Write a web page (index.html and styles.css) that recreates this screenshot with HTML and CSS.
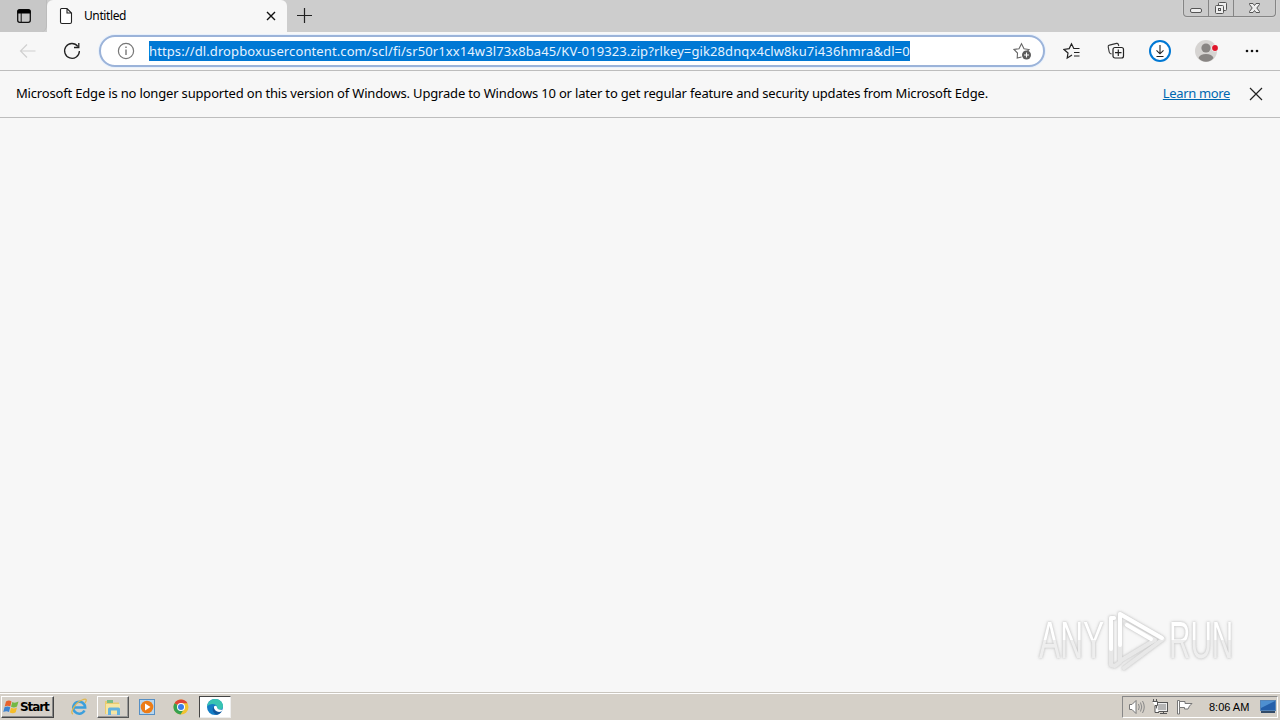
FILE: index.html
```html
<!DOCTYPE html>
<html lang="en">
<head>
<meta charset="utf-8">
<title>Untitled</title>
<link rel="stylesheet" href="styles.css">
</head>
<body>
<div class="screen">
  <header class="tabstrip">
    <div class="tab-actions"><svg width="16" height="16" viewBox="0 0 16 16"><rect x="1.7" y="1.7" width="12.6" height="12.6" rx="2" fill="none" stroke="#111" stroke-width="1.3"/><path d="M1.5 5.5V3.3Q1.5 1.5 3.3 1.5H12.7Q14.5 1.5 14.5 3.3V5.5Z" fill="#000"/><path d="M5.2 5V14" stroke="#111"/></svg></div>
    <div class="tab">
      <svg class="page-icon" width="14" height="18" viewBox="0 0 14 18"><path d="M2.500 1.500H8L12.500 6V15Q12.500 16.500 11 16.500H3Q1.500 16.500 1.500 15V2.500Q1.500 1.500 2.500 1.500ZM8 1.500V6H12.500" fill="#fff" stroke="#222" stroke-width="1.1"/></svg>
      <span class="tab-title">Untitled</span>
      <svg class="tab-close" width="10" height="10" viewBox="0 0 10 10"><path d="M1 1L9 9M9 1L1 9" stroke="#111" stroke-width="1.4"/></svg>
    </div>
    <svg class="new-tab" width="16" height="16" viewBox="0 0 16 16"><path d="M1 8.500H16M8.500 1V16" stroke="#222" stroke-width="1.2"/></svg>
    <div class="window-controls">
      <span class="ctl ctl-min"><svg width="24" height="16" viewBox="0 0 24 16"><rect x="6.500" y="8.500" width="11" height="4" rx="1.5" fill="#eee" stroke="#555"/></svg></span>
      <span class="ctl ctl-max"><svg width="24" height="16" viewBox="0 0 24 16"><g fill="#eee" stroke="#555"><rect x="9.500" y="2.500" width="8" height="8" rx="1"/><rect x="6.500" y="5.500" width="8" height="8" rx="1"/><rect x="9.500" y="8.500" width="2" height="2"/></g></svg></span>
      <span class="ctl ctl-close"><svg width="42" height="16" viewBox="0 0 42 16"><path d="M15.500 3.500H19L20.500 5.500L22 3.500H25.500V4.500L22.800 8L25.500 11.500V12.500H22L20.500 10.500L19 12.500H15.500V11.500L18.200 8L15.500 4.500Z" fill="#eee" stroke="#555"/></svg></span>
    </div>
  </header>

  <nav class="toolbar">
    <svg class="back" width="18" height="16" viewBox="0 0 18 16"><path d="M16.500 8H1.800M8 1.500L1.500 8L8 14.500" fill="none" stroke="#d0d0d0" stroke-width="1.2"/></svg>
    <svg class="reload" width="18" height="18" viewBox="0 0 18 18"><path d="M14.800 4.300A7.400 7.400 0 1 0 16.400 9M15.800 1V5.500H11" fill="none" stroke="#222" stroke-width="1.3"/></svg>
    <div class="address">
      <svg class="info" width="18" height="18" viewBox="0 0 18 18"><circle cx="9" cy="9" r="7.600" fill="none" stroke="#777" stroke-width="1.2"/><path d="M9 7.500V13M9 4.500V6" stroke="#777" stroke-width="1.4"/></svg>
      <span class="url">https://dl.dropboxusercontent.com/scl/fi/sr50r1xx14w3l73x8ba45/KV-019323.zip?rlkey=gik28dnqx4clw8ku7i436hmra&amp;dl=0</span>
      <svg class="add-favorite" width="19" height="18" viewBox="0 0 19 18"><path d="M8.500 15L4.200 16L4.500 11L1 7.500L6 6.700L8.500 1.800L11 6.700L16 7.500L14.500 9" fill="none" stroke="#666" stroke-width="1.1"/><circle cx="13.500" cy="13" r="4.500" fill="#5c5c5c"/><path d="M11 13H16M13.500 10.500V15.500" stroke="#fff" stroke-width="1.1"/></svg>
    </div>
    <div class="tools">
      <svg width="18" height="18" viewBox="0 0 18 18"><path d="M9 13L4.200 16L5 11L1 7.500L6.200 6.600L8.500 1.800L10.800 6.500H16.500M11 10.500H16.500M11 14H16.500" fill="none" stroke="#222" stroke-width="1.2"/></svg>
      <svg width="18" height="18" viewBox="0 0 18 18"><path d="M4.500 12L3.300 11.500Q2.400 11 2.200 10L1.200 4.800Q1 3.400 2.400 3.100L9.500 1.400Q10.900 1.200 11.400 2.500L11.800 4" fill="none" stroke="#333" stroke-width="1.1"/><rect x="6" y="5.500" width="10.500" height="10.500" rx="2" fill="#f7f7f7" stroke="#222" stroke-width="1.2"/><path d="M8 10.700H14.500M11.300 7.500V14" stroke="#222" stroke-width="1.2"/></svg>
      <svg class="download" width="24" height="24" viewBox="0 0 24 24"><circle cx="12" cy="12" r="10" fill="#fff" stroke="#0078d4" stroke-width="2"/><path d="M12 6V14.500M8.500 11.300L12 14.800L15.500 11.300M8.500 17.500H15.500" fill="none" stroke="#222" stroke-width="1.1"/></svg>
      <svg class="profile" width="24" height="24" viewBox="0 0 24 24"><circle cx="11" cy="12" r="11" fill="#d6d4d2"/><circle cx="11" cy="9" r="4.600" fill="#888583"/><path d="M3.500 19Q5 15 11 15T18.500 19Q15.500 22.800 11 22.800T3.500 19Z" fill="#888583"/><circle cx="20" cy="9" r="3.600" fill="#f7f7f7"/><circle cx="20" cy="9" r="2.900" fill="#e0162b"/></svg>
      <svg class="more" width="14" height="4" viewBox="0 0 14 4"><g fill="#111"><circle cx="2" cy="2" r="1.300"/><circle cx="7" cy="2" r="1.300"/><circle cx="12" cy="2" r="1.300"/></g></svg>
    </div>
  </nav>

  <div class="infobar">
    <span class="message">Microsoft Edge is no longer supported on this version of Windows. Upgrade to Windows 10 or later to get regular feature and security updates from Microsoft Edge.</span>
    <a class="learn">Learn more</a>
    <svg class="dismiss" width="14" height="14" viewBox="0 0 14 14"><path d="M1 1L13 13M13 1L1 13" stroke="#222" stroke-width="1.2"/></svg>
  </div>

  <main class="content">
    <div class="watermark">
      <span class="word word-any">ANY</span>
      <svg width="60" height="64" viewBox="0 0 60 64"><g fill="none" stroke-linejoin="round" stroke-linecap="round" stroke-width="4"><path d="M7 9H4V56L8 57L13 53M13 5L56 30L17 59M13 5V52L48 31L19 15" stroke="#e8e8e8"/><path d="M4 40V9H7M13 36V5L55 29M20 16L44 30" stroke="#fff"/></g></svg>
      <span class="word word-run">RUN</span>
    </div>
  </main>

  <footer class="taskbar">
    <div class="start"><svg width="17" height="16" viewBox="0 0 17 16"><path d="M3 2.500Q6 .5 8.500 2.500L7.300 7.500Q4.500 6 1.700 7.500Z" fill="#e8622c"/><path d="M9.300 3Q12 4.500 15.500 2.500L14 7.500Q11 9.500 8 7.800Z" fill="#73b843"/><path d="M1.500 8.300Q4.500 6.800 7.200 8.300L6 13Q3.500 11.500 .3 13Z" fill="#3d83d0"/><path d="M8 8.800Q11 10.300 14 8.500L12.700 13.300Q10 15 6.800 13.500Z" fill="#f5bd29"/></svg><span>Start</span></div>
    <div class="launchers">
      <span class="task"><svg width="18" height="18" viewBox="0 0 18 18"><path d="M14.500 12.500A6 6 0 1 1 15.200 9.500H4" fill="none" stroke="#3c9fdc" stroke-width="2.500"/><path d="M3 16C-1 15 6 4 12 2C17 0 17 2 15 5" fill="none" stroke="#dfb750" stroke-width="1.300"/></svg></span>
      <span class="task raised"><svg width="18" height="18" viewBox="0 0 18 18"><path d="M1 3H7L8 4.500H15V16H1Z" fill="#e8cb70"/><path d="M3 2H9V5H3Z" fill="#7bbd86"/><path d="M2 6H16V16H2Z" fill="#f6e6a2"/><path d="M4 17V11Q4 9.500 5.500 9.500H14.500Q16 9.500 16 11V17H13V12.500H7V17Z" fill="#62b2df"/></svg></span>
      <span class="task"><svg width="18" height="18" viewBox="0 0 18 18"><rect x="1.500" y="1.500" width="15" height="15" fill="#b7d6ef" stroke="#568fc4"/><circle cx="9" cy="9" r="6.300" fill="#ed7c16"/><path d="M7 5.500L12.500 9L7 12.500Z" fill="#fff"/></svg></span>
      <span class="task"><svg width="18" height="18" viewBox="0 0 18 18"><circle cx="9" cy="9" r="7.500" fill="#f1c331"/><path d="M9 9L2.500 5.200A7.500 7.500 0 0 1 15.500 5.200H9Z" fill="#df4436"/><path d="M2.500 5.200A7.500 7.500 0 0 0 8.500 16.500L12 11L9 9Z" fill="#35a151"/><circle cx="9" cy="9" r="4" fill="#fff"/><circle cx="9" cy="9" r="3" fill="#3b7de8"/></svg></span>
      <span class="task active"><svg width="18" height="18" viewBox="0 0 18 18"><circle cx="9" cy="9" r="8" fill="#147dc5"/><path d="M1.200 8.500C1.500 4 5 1 9.200 1C14 1 17 4.500 17 8C17 11 14.500 12 12 11.500C10.500 11.200 11.500 10.500 11.200 9C10.500 6 5 4.500 1.200 8.500Z" fill="#38c4b2"/><path d="M11 9C11 11 13 12.500 16.800 11.500L15 14Q11 15.500 8.500 13Q7 11 8 8.500Q10 7 11 9Z" fill="#fff"/><path d="M7.500 8.500Q5 13 10 16.700Q14 16.500 15.800 13.500Q9 15.500 7.500 8.500Z" fill="#12579c"/></svg></span>
    </div>
    <div class="tray">
      <svg width="18" height="18" viewBox="0 0 18 18"><path d="M1.500 6.500H4L8 2.500V15.500L4 11.500H1.500Z" fill="#fff" stroke="#777"/><path d="M10.500 6Q12 9 10.500 12M12.500 4.500Q15 9 12.500 13.500M14.500 3Q18 9 14.500 15" fill="none" stroke="#888"/></svg>
      <svg width="18" height="18" viewBox="0 0 18 18"><rect x="4.500" y="4.500" width="11" height="9" fill="#eee" stroke="#555"/><path d="M6 6H14V12H6Z" fill="#b5b5b5"/><path d="M8 15.500H15M11.500 13V15" stroke="#555"/><path d="M1.500 1V4M4.500 1V4M.5 3.500H5.500V7.500H3V14.500H7" fill="#fff" stroke="#555"/></svg>
      <svg width="18" height="18" viewBox="0 0 18 18"><path d="M1.500 2.500H3.500V16H1.500Z" fill="#fff" stroke="#777"/><path d="M3.500 3.500H9V5.500H16L13.500 8L12 11H8.500V9.500H3.500Z" fill="#fff" stroke="#777"/></svg>
      <span class="clock">8:06 AM</span>
      <svg class="desktop" width="16" height="14" viewBox="0 0 16 14"><rect x=".5" y=".5" width="15" height="10" fill="#245faa" stroke="#5584b7"/><path d="M1 1H15L1 8Z" fill="#4e8fd0"/><path d="M1 12H15" stroke="#334b68" stroke-width="2"/></svg>
    </div>
  </footer>
</div>
</body>
</html>
```
FILE: styles.css
```css
* { box-sizing: border-box; }
body { margin: 0; font-family: "Noto Sans", "Open Sans", sans-serif; color: #000; }
svg { display: block; flex: none; }
.screen { width: 1280px; height: 720px; display: flex; flex-direction: column; overflow: hidden; background: #f7f7f7; }
.tabstrip { height: 32px; flex: none; display: flex; background: #cdcdcd; }
.tab-actions { width: 47px; padding: 8px 0 0 16px; background: #c7c7c7; border-radius: 0 0 6px 0; border-right: 1px solid #bcbcbc; }
.tab { width: 240px; display: flex; align-items: center; padding: 0 11px 0 12px; background: #f7f7f7; border-radius: 6px 6px 0 0; }
.tab-title { margin-left: 11px; font-size: 12px; line-height: 18px; padding-bottom: 1px; letter-spacing: -0.4px; flex: 1; }
.new-tab { margin: 7px 0 0 9px; }
.window-controls { display: flex; width: 93px; height: 17px; margin: 0 4px 0 auto; border: 1px solid #858585; border-top: 0; border-radius: 0 0 4px 4px; background: #cbcbcb; box-shadow: 0 0 2px #e5e5e5; overflow: hidden; }
.ctl { display: flex; justify-content: center; width: 25px; border-right: 1px solid #858585; }
.ctl-close { flex: 1; border: 0; }
.toolbar { height: 39px; flex: none; display: flex; align-items: center; padding-left: 19px; border-bottom: 1px solid #bdbdbd; }
.reload { margin-left: 26px; }
.address { width: 946px; height: 32px; margin: 0 0 0 18px; padding: 0 11px 0 16px; display: flex; align-items: center; background: #fff; border: 2px solid #9bb3d9; border-radius: 16px; box-shadow: 0 0 0 1px #e8f1fc; }
.url { width: 761px; height: 20px; margin-left: 14px; background: #0078d4; color: #e6f3ff; font-size: 13px; line-height: 20px; letter-spacing: 0.105px; white-space: nowrap; }
.add-favorite { margin-left: auto; }
.tools { flex: 1; display: flex; align-items: center; margin-left: 18px; }
.tools svg + svg { margin-left: 26px; }
.tools .download { margin-left: 23px; }
.tools .profile { margin-left: 23px; }
.tools .more { margin-left: 26px; }
.infobar { height: 47px; flex: none; display: flex; align-items: center; padding: 0 17px 0 16px; font-size: 13px; line-height: 18px; border-bottom: 1px solid #bdbdbd; white-space: nowrap; }
.message { letter-spacing: -0.175px; padding-bottom: 2px; }
.learn { margin-left: auto; padding-bottom: 2px; letter-spacing: -0.35px; color: #0067b0; text-decoration: underline; }
.dismiss { margin-left: 19px; }
.content { flex: 1; display: flex; align-items: flex-end; justify-content: flex-end; padding: 0 48px 19px 0; }
.watermark { display: flex; align-items: center; justify-content: space-between; width: 194px; height: 64px; filter: drop-shadow(0 0 1px #c4c4c4) drop-shadow(0 0 1.5px #ddd); }
.word { width: 112px; margin: -2px -46px 0 1px; flex: none; font-family: "Liberation Sans", sans-serif; font-size: 52px; line-height: 64px; color: transparent; background: linear-gradient(#fff 50%, #eee 50%); background-clip: text; white-space: nowrap; transform: scaleX(.61); transform-origin: left; }
.word-run { margin-right: -49px; transform: scaleX(.57); }
.taskbar { height: 28px; flex: none; display: flex; align-items: center; padding: 1px; background: #d5d0c8; border-top: 1px solid #c9c5be; box-shadow: inset 0 1px #fff; }
.start { width: 53px; height: 22px; display: flex; align-items: center; padding-left: 1px; border: 1px solid; border-color: #fff #444 #444 #fff; box-shadow: inset -1px -1px #888; font: bold 12px "DejaVu Sans", sans-serif; letter-spacing: -1.1px; }
.launchers { display: flex; margin-left: 9px; gap: 2px; }
.task { width: 32px; height: 22px; display: flex; align-items: center; justify-content: center; }
.raised { border: 1px solid; border-color: #fff #555 #555 #fff; box-shadow: inset -1px -1px #999; }
.active { background: #fff; border: 1px solid; border-color: #444 #eee #eee #444; }
.tray { width: 156px; height: 22px; margin-left: auto; margin-right: 1px; display: flex; align-items: center; gap: 6px; padding: 0 1px 0 5px; border: 1px solid; border-color: #888 #fff #fff #888; }
.clock { margin-left: 9px; font: 11px "Liberation Sans", sans-serif; white-space: nowrap; }
.desktop { margin-left: auto; }
```
